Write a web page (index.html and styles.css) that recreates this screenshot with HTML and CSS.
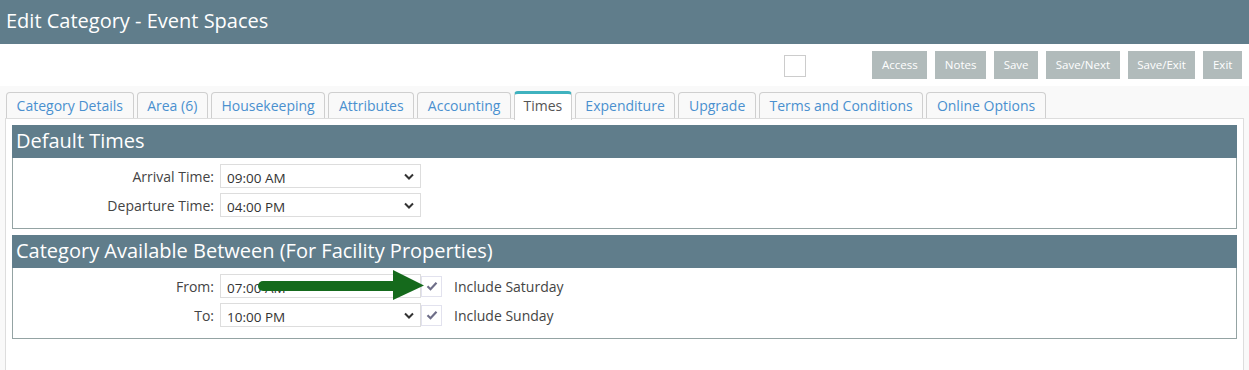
FILE: index.html
```html
<!DOCTYPE html>
<html lang="en">
<head>
  <meta charset="UTF-8">
  <title>Edit Category - Event Spaces</title>
  <link rel="stylesheet" href="styles.css">
</head>
<body>
  <div class="titlebar">Edit Category - Event Spaces</div>

  <div class="toolbar">
    <span class="toolbar-check"></span>
    <div class="buttons">
      <button>Access</button>
      <button>Notes</button>
      <button>Save</button>
      <button>Save/Next</button>
      <button>Save/Exit</button>
      <button>Exit</button>
    </div>
  </div>

  <div class="tab-area">
    <ul class="tabs">
      <li>Category Details</li>
      <li>Area (6)</li>
      <li>Housekeeping</li>
      <li>Attributes</li>
      <li>Accounting</li>
      <li class="active">Times</li>
      <li>Expenditure</li>
      <li>Upgrade</li>
      <li>Terms and Conditions</li>
      <li>Online Options</li>
    </ul>

    <div class="panel">
      <div class="section">
        <div class="section-head">Default Times</div>
        <div class="section-body">
          <div class="row">
            <label>Arrival Time:</label>
            <div class="select"><span>09:00 AM</span>
              <svg width="10" height="7" viewBox="0 0 10 7"><path d="M1 1.5l4 4 4-4" fill="none" stroke="#333" stroke-width="2"/></svg>
            </div>
          </div>
          <div class="row">
            <label>Departure Time:</label>
            <div class="select"><span>04:00 PM</span>
              <svg width="10" height="7" viewBox="0 0 10 7"><path d="M1 1.5l4 4 4-4" fill="none" stroke="#333" stroke-width="2"/></svg>
            </div>
          </div>
        </div>
      </div>

      <div class="section">
        <div class="section-head">Category Available Between (For Facility Properties)</div>
        <div class="section-body">
          <div class="row">
            <label>From:</label>
            <div class="select"><span>07:00 AM</span>
              <svg width="10" height="7" viewBox="0 0 10 7"><path d="M1 1.5l4 4 4-4" fill="none" stroke="#333" stroke-width="2"/></svg>
            </div>
            <span class="check">
              <svg width="12" height="10" viewBox="0 0 12 10"><path d="M1.5 5.2l3 3 6-6.5" fill="none" stroke="#6e6e88" stroke-width="2.2"/></svg>
            </span>
            <span class="check-label">Include Saturday</span>
          </div>
          <div class="row">
            <label>To:</label>
            <div class="select"><span>10:00 PM</span>
              <svg width="10" height="7" viewBox="0 0 10 7"><path d="M1 1.5l4 4 4-4" fill="none" stroke="#333" stroke-width="2"/></svg>
            </div>
            <span class="check">
              <svg width="12" height="10" viewBox="0 0 12 10"><path d="M1.5 5.2l3 3 6-6.5" fill="none" stroke="#6e6e88" stroke-width="2.2"/></svg>
            </span>
            <span class="check-label">Include Sunday</span>
          </div>
        </div>
      </div>
    </div>
  </div>

  <!-- annotation arrow pointing at the Saturday checkbox -->
  <svg class="arrow" width="180" height="40" viewBox="0 0 180 40">
    <line x1="7" y1="20" x2="138" y2="20" stroke="#156a1c" stroke-width="10" stroke-linecap="round"/>
    <polygon points="137,4 168,19.5 137,34" fill="#156a1c"/>
  </svg>
</body>
</html>
```

FILE: styles.css
```css
body {
  margin: 0;
  font-family: "Open Sans", "Liberation Sans", sans-serif;
  background: #fff;
  color: #333;
  position: relative;
}

.titlebar {
  height: 44px;
  line-height: 42px;
  background: #607d8b;
  color: #fff;
  font-size: 20px;
  padding-left: 6px;
}

.toolbar {
  height: 42px;
  display: flex;
  justify-content: flex-end;
  align-items: center;
  padding-right: 7px;
}

.toolbar-check {
  width: 20px;
  height: 20px;
  border: 1px solid #ccc;
  margin-right: 66px;
  margin-top: 1px;
}

.buttons {
  display: flex;
  gap: 8px;
  margin-top: -1px;
}

.buttons button {
  height: 28px;
  padding: 0 9.6px;
  border: none;
  background: #b1bbbb;
  color: #fff;
  font-family: "Open Sans", "Liberation Sans", sans-serif;
  font-size: 11.5px;
}

.tab-area {
  background: #f9f9f9;
  padding: 6px 5px 0 5px;
  height: 278px;
}

.tabs {
  list-style: none;
  margin: 0 0 0 1px;
  padding: 0;
  display: flex;
  gap: 3px;
  height: 26px;
}

.tabs li {
  height: 25px;
  line-height: 25px;
  padding: 0 9.6px;
  border: 1px solid #cfcfcf;
  border-bottom: none;
  border-radius: 4px 4px 0 0;
  background: #f9f9f9;
  color: #4a90cf;
  font-size: 14px;
}

.tabs li.active {
  background: #fff;
  color: #555;
  border-top: 3px solid #3fb2bf;
  height: 26px;
  line-height: 24px;
  margin-top: -1px;
  padding: 0 8.5px;
  position: relative;
  z-index: 1;
}

.panel {
  background: #fff;
  border: 1px solid #ddd;
  border-bottom: none;
  width: 1225px;
  height: 245px;
  padding: 6px 6px 0 6px;
}

.section {
  margin-bottom: 6px;
}

.section-head {
  height: 33px;
  line-height: 31px;
  background: #607d8b;
  color: #fff;
  font-size: 20px;
  padding-left: 4px;
}

.section-body {
  border: 1px solid #94a3a3;
  border-top: none;
  height: 71px;
  padding-top: 6px;
  box-sizing: border-box;
}

.row {
  display: flex;
  align-items: center;
  height: 24px;
  margin-bottom: 5px;
}

.row label {
  width: 201px;
  text-align: right;
  font-size: 14px;
  color: #444;
  margin-right: 6px;
}

.select {
  height: 22px;
  border: 1px solid #ddd;
  background: #fff;
  display: flex;
  align-items: center;
  justify-content: space-between;
  padding: 0 6px;
  width: 187px;
  font-size: 13.5px;
  color: #333;
}

.select span {
  padding-top: 3px;
}

.check {
  width: 19px;
  height: 19px;
  border: 1px solid #e2e2ee;
  display: flex;
  align-items: center;
  justify-content: center;
}

.check-label {
  margin-left: 12px;
  font-size: 14px;
  color: #444;
}

.arrow {
  position: absolute;
  left: 256px;
  top: 266px;
}
```
